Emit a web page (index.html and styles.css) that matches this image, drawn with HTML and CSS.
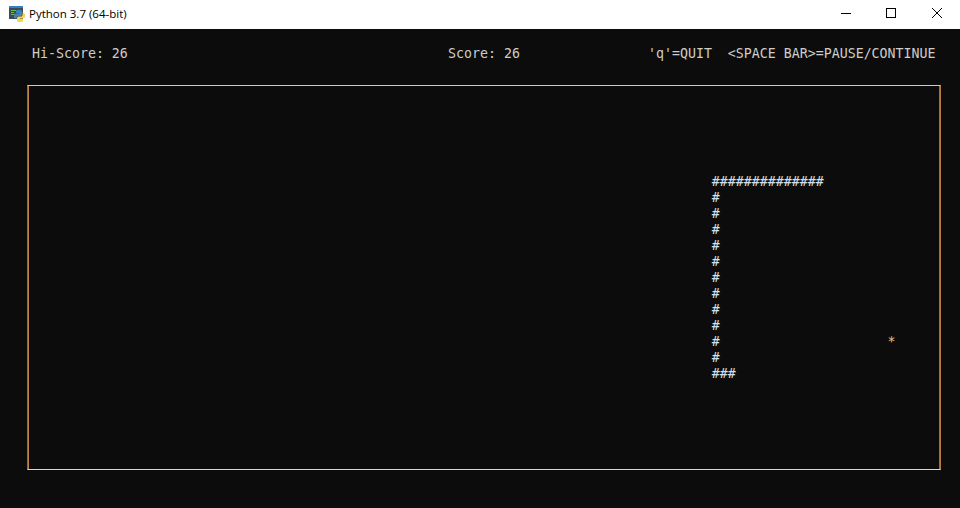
FILE: index.html
```html
<!DOCTYPE html>
<html lang="en">
<head>
<meta charset="utf-8">
<title>Python 3.7 (64-bit)</title>
<link rel="stylesheet" href="styles.css">
</head>
<body>
<div class="window">
  <header class="titlebar">
    <div class="title">
      <svg class="app-icon" width="16" height="16" viewBox="0 0 16 16">
        <rect x="0" y="0" width="14" height="13" fill="#3f4a52"/>
        <rect x="0" y="0" width="14" height="2" fill="#2a86c8"/>
        <path d="M2 4.500h5M2 6.500h3M2 8.500h4" stroke="#6db84f" stroke-width="1"/>
        <path d="M8.500 4h3a1.500 1.500 0 0 1 1.500 1.500V8.500a1.500 1.500 0 0 1-1.500 1.500H9a1.500 1.500 0 0 0-1.500 1.500V12.500H6.500A1.500 1.500 0 0 1 5 11V9a1.500 1.500 0 0 1 1.500-1.500H10V7H7V5.500A1.500 1.500 0 0 1 8.500 4z" fill="#3f82bc"/>
        <path d="M13.500 7h1A1.500 1.500 0 0 1 16 8.500v2a1.500 1.500 0 0 1-1.500 1.500H11v.5h3V14.500A1.500 1.500 0 0 1 12.500 16h-3A1.500 1.500 0 0 1 8 14.500V12a1.500 1.500 0 0 1 1.500-1.500H12A1.500 1.500 0 0 0 13.500 9z" fill="#f8d44f"/>
      </svg>
      <span class="title-text">Python 3.7 (64-bit)</span>
    </div>
    <div class="controls">
      <button class="control control-min" aria-label="Minimize">
        <svg width="10" height="10" viewBox="0 0 10 10"><path d="M0 5.500h10" stroke="#000" stroke-width="1"/></svg>
      </button>
      <button class="control" aria-label="Maximize">
        <svg width="10" height="10" viewBox="0 0 10 10"><rect x=".5" y=".5" width="9" height="9" fill="none" stroke="#000"/></svg>
      </button>
      <button class="control" aria-label="Close">
        <svg width="10" height="10" viewBox="0 0 10 10"><path d="M0 0l10 10M10 0L0 10" stroke="#000" stroke-width="1"/></svg>
      </button>
    </div>
  </header>
  <main class="console">
    <div class="status">
      <span class="hi">Hi-Score: 26</span>
      <span class="score">Score: 26</span>
      <span class="help">'q'=QUIT  &lt;SPACE BAR&gt;=PAUSE/CONTINUE</span>
    </div>
    <div class="board">
<pre class="field">

                                                                                     ##############
                                                                                     #
                                                                                     #
                                                                                     #
                                                                                     #
                                                                                     #
                                                                                     #
                                                                                     #
                                                                                     #
                                                                                     #
                                                                                     #                     <span class="food">*</span>
                                                                                     #
                                                                                     ###</pre>
    </div>
  </main>
</div>
</body>
</html>
```
FILE: styles.css
```css
* { box-sizing: border-box; }
html, body { margin: 0; height: 100%; background: #0c0c0c; }
.window { display: flex; flex-direction: column; height: 508px; overflow: hidden; }
.titlebar {
  flex: 0 0 29px;
  display: flex;
  justify-content: space-between;
  background: #fff;
}
.title { display: flex; align-items: center; gap: 4px; padding: 0 0 1px 9px; }
.app-icon { display: block; margin-top: -1px; }
.title-text { font: 11.5px/16px "Open Sans", "Noto Sans", sans-serif; color: #000; }
.controls { display: flex; }
.control {
  width: 46px;
  padding: 0 0 3px;
  border: 0;
  background: none;
  display: flex;
  align-items: center;
  justify-content: center;
}
.control-min { width: 44px; }
.control svg { display: block; }
.console {
  flex: 1;
  font-family: "DejaVu Sans Mono", "Liberation Mono", monospace;
  font-size: 13.28px;
  line-height: 16px;
  color: #d0cdc8;
}
.status { display: flex; margin-top: 17px; height: 16px; padding-left: 32px; white-space: pre; }
.hi { width: 416px; }
.score { width: 200px; }
.board {
  width: 914px;
  height: 385px;
  margin: 23px 0 0 27px;
  border-style: solid;
  border-width: 1px;
  border-color: #cccccc #b07a40 #d6d6d6 #3f7fb0;
  box-shadow: inset 1px 0 0 #bc8448, inset -1px 0 0 #5c7f9c;
}
.field {
  margin: 72px 0 0 5px;
  padding: 0;
  font: inherit;
  color: #d2e0ea;
}
.food { color: #ecc474; }
```
